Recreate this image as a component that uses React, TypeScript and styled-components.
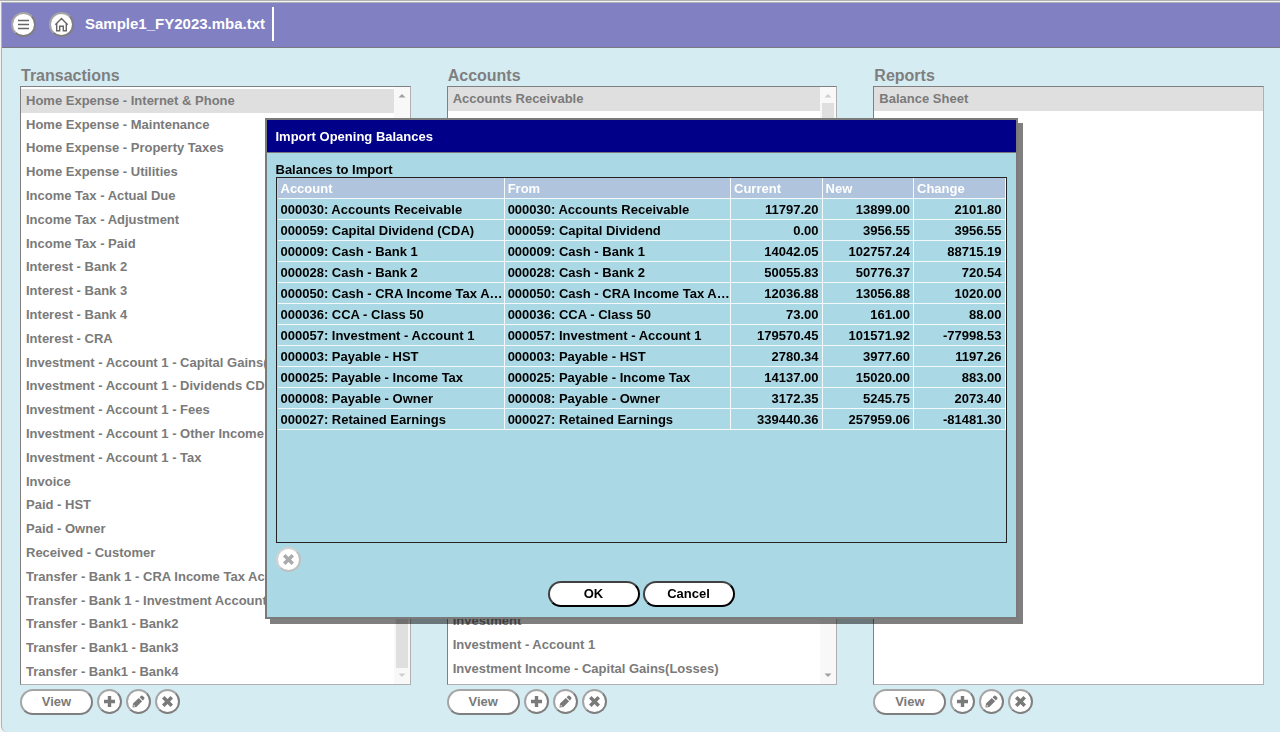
import React from "react";
import styled, { createGlobalStyle } from "styled-components";

const GlobalStyle = createGlobalStyle`
  * { box-sizing: border-box; }
  body {
    margin: 0;
    background: #f4f4f4;
    font-family: "Liberation Sans", Arial, sans-serif;
    font-size: 13px;
    font-weight: bold;
  }
  h1, h2, ul { margin: 0; padding: 0; }
  button { font: inherit; }
`;

const Page = styled.div`
  min-height: 100vh;
  display: flex;
  border-top: 1px solid #b0b0b0;
  padding: 1px 0 0 1px;
`;

const Workspace = styled.div`
  flex: 1;
  min-width: 0;
  display: flex;
  flex-direction: column;
  background: #d5ecf2;
  border: 1px solid #a9b3b8;
  border-right: 0;
  border-bottom: 0;
  border-bottom-left-radius: 6px;
`;

const TopBar = styled.header`
  display: flex;
  align-items: center;
  height: 45px;
  padding: 0 0 2px 9px;
  gap: 13px;
  background: #8080c2;
  border-bottom: 1px solid #7b7783;
`;

const FileName = styled.h1`
  font-size: 15px;
  line-height: 20px;
  color: #fff;
  margin-left: -2px;
`;

const Divider = styled.span`
  width: 2px;
  height: 34px;
  margin-left: -6px;
  background: #fff;
`;

const Columns = styled.main`
  flex: 1;
  display: flex;
  gap: 36px;
  padding: 18px 16px 17px 18px;
`;

const Column = styled.section`
  flex: 1;
  min-width: 0;
  display: flex;
  flex-direction: column;
`;

const Heading = styled.h2`
  font-size: 16px;
  line-height: 20px;
  color: #7f7f7f;
  padding-left: 1px;
`;

const ListBox = styled.div`
  flex: 1;
  display: flex;
  background: #fff;
  border: 1px solid #b0b0b0;
  border-top-color: #808080;
  border-left-color: #808080;
`;

const Items = styled.ul<{ $inset?: boolean }>`
  flex: 1;
  min-width: 0;
  display: flex;
  flex-direction: column;
  list-style: none;
  padding-top: ${(p) => (p.$inset ? 2 : 0)}px;
  padding-bottom: ${(p) => (p.$inset ? 0 : 3)}px;
`;

const Item = styled.li<{ $selected?: boolean; $fill?: boolean; $pushed?: boolean }>`
  flex: ${(p) => (p.$fill ? "1 1 0" : "0 0 24px")};
  display: flex;
  align-items: center;
  line-height: 14px;
  padding-left: 5px;
  margin-top: ${(p) => (p.$pushed ? "auto" : 0)};
  white-space: nowrap;
  overflow: hidden;
  color: #7a7a7a;
  background: ${(p) => (p.$selected ? "#dfdfdf" : "transparent")};
`;

const ScrollTrack = styled.div`
  width: 16px;
  display: flex;
  flex-direction: column;
  align-items: center;
  background: #f8f8f8;
`;

const ScrollThumb = styled.div<{ $end?: boolean }>`
  width: 12px;
  height: 85%;
  background: #dfdfdf;
  margin-top: ${(p) => (p.$end ? "auto" : 0)};
  margin-bottom: ${(p) => (p.$end ? 0 : "auto")};
`;

const Arrow = styled.svg`
  display: block;
  width: 16px;
  height: 16px;
`;

const Actions = styled.div`
  display: flex;
  gap: 4px;
  padding-top: 4px;
`;

const PillButton = styled.button<{ $strong?: boolean }>`
  width: ${(p) => (p.$strong ? 92 : 73)}px;
  height: 26px;
  padding: 0;
  border-radius: 13px;
  background: #fff;
  border: 2px solid;
  border-color: ${(p) => (p.$strong ? "#404040 #000 #000 #404040" : "#a5a5a5 #7f7f7f #7f7f7f #a5a5a5")};
  line-height: 20px;
  color: ${(p) => (p.$strong ? "#000" : "#7a7a7a")};
`;

const RoundButton = styled.button`
  width: 25px;
  height: 25px;
  padding: 0;
  display: flex;
  align-items: center;
  justify-content: center;
  border-radius: 50%;
  background: #fff;
  border: 2px solid;
  border-color: #a5a5a5 #7f7f7f #7f7f7f #a5a5a5;
  color: #7a7a7a;
  &:disabled {
    border-color: #d2d2d2 #bfbfbf #bfbfbf #d2d2d2;
    color: #aaa;
  }
  svg { display: block; flex: none; }
`;

const Overlay = styled.div`
  position: fixed;
  inset: 0;
  display: flex;
  align-items: center;
  justify-content: center;
  padding: 5px 0 0 2px;
`;

const Dialog = styled.div`
  width: 753px;
  max-width: 96vw;
  background: #aad8e4;
  border: 2px solid #7a7a7a;
  box-shadow: 5px 5px 0 rgba(0, 0, 0, 0.5);
`;

const DialogTitle = styled.h2`
  height: 33px;
  padding-left: 9px;
  font-size: 13px;
  line-height: 34px;
  color: #fff;
  background: #000089;
  border-bottom: 1px solid #777;
`;

const DialogBody = styled.div`
  padding: 10px 9px;
`;

const TableFrame = styled.div`
  min-height: 366px;
  border: 1px solid #222;
  padding-left: 1px;
`;

const Caption = styled.div`
  line-height: 14px;
  color: #000;
`;

const Table = styled.table`
  width: 100%;
  table-layout: fixed;
  border-collapse: separate;
  border-spacing: 0;
`;

const Cell = styled.td<{ $number?: boolean }>`
  height: 21px;
  padding: 1px ${(p) => (p.$number ? 3 : 0)}px 0 3px;
  line-height: 19px;
  text-align: ${(p) => (p.$number ? "right" : "left")};
  white-space: nowrap;
  overflow: hidden;
  text-overflow: ellipsis;
  border-right: 1px solid #f4fafc;
  border-bottom: 1px solid #f4fafc;
`;

const HeadCell = styled(Cell)`
  color: #fff;
  background: #b0c4de;
`;

const DialogTools = styled.div`
  padding-top: 4px;
`;

const DialogButtons = styled.div`
  display: flex;
  justify-content: center;
  gap: 3px;
  padding-top: 9px;
`;

const PlusIcon = () => (
  <svg width="13" height="13" viewBox="0 0 13 13" fill="currentColor" aria-hidden="true">
    <path d="M4.8 1h3.4v3.8H12v3.4H8.2V12H4.8V8.2H1V4.8h3.8z" />
  </svg>
);
const PencilIcon = () => (
  <svg width="13" height="13" viewBox="0 0 13 13" fill="currentColor" aria-hidden="true">
    <path fillRule="evenodd" d="M.5 12.5 1 8.6 6.8 3 10.1 6.3 4.4 12ZM7.6 2.3 9.2.8Q10 .3 10.8.9L12.2 2.3Q12.8 3.1 12.2 3.9L10.8 5.5ZM1.8 9.7 1.6 11.4 3.3 11.2Z" />
  </svg>
);
const CrossIcon = () => (
  <svg width="13" height="13" viewBox="0 0 13 13" fill="currentColor" aria-hidden="true">
    <path d="M3.5 1 6.5 4 9.5 1 12 3.5 9 6.5 12 9.5 9.5 12 6.5 9 3.5 12 1 9.5 4 6.5 1 3.5Z" />
  </svg>
);
const MenuIcon = () => (
  <svg width="13" height="13" viewBox="0 0 13 13" stroke="#666" strokeWidth="1.4" aria-hidden="true">
    <path d="M1 2.5h11M1 6.5h11M1 10.5h11" />
  </svg>
);
const HomeIcon = () => (
  <svg width="15" height="15" viewBox="0 0 15 15" fill="none" stroke="#666" strokeWidth="1.4" aria-hidden="true">
    <path d="M1.3 7.8 7.5 1.5 13.7 7.8M2.7 6.6v7.2h3V9.2h3.6v4.6h3V6.6" />
  </svg>
);

function Scrollbar({ atEnd }: { atEnd?: boolean }) {
  return (
    <ScrollTrack aria-hidden="true">
      <Arrow viewBox="0 0 16 16"><path d="M4.5 10.5 8 7l3.5 3.5z" fill={atEnd ? "#a0a0a0" : "#cfcfcf"} /></Arrow>
      <ScrollThumb $end={atEnd} />
      <Arrow viewBox="0 0 16 16"><path d="M4.5 5.5 8 9l3.5-3.5z" fill={atEnd ? "#cfcfcf" : "#a0a0a0"} /></Arrow>
    </ScrollTrack>
  );
}

function ListActions() {
  return (
    <Actions>
      <PillButton>View</PillButton>
      <RoundButton aria-label="Add"><PlusIcon /></RoundButton>
      <RoundButton aria-label="Edit"><PencilIcon /></RoundButton>
      <RoundButton aria-label="Delete"><CrossIcon /></RoundButton>
    </Actions>
  );
}

const transactions = [
  "Home Expense - Internet & Phone", "Home Expense - Maintenance", "Home Expense - Property Taxes",
  "Home Expense - Utilities", "Income Tax - Actual Due", "Income Tax - Adjustment", "Income Tax - Paid",
  "Interest - Bank 2", "Interest - Bank 3", "Interest - Bank 4", "Interest - CRA",
  "Investment - Account 1 - Capital Gains(Losses)", "Investment - Account 1 - Dividends CDN",
  "Investment - Account 1 - Fees", "Investment - Account 1 - Other Income", "Investment - Account 1 - Tax",
  "Invoice", "Paid - HST", "Paid - Owner", "Received - Customer",
  "Transfer - Bank 1 - CRA Income Tax Account", "Transfer - Bank 1 - Investment Account",
  "Transfer - Bank1 - Bank2", "Transfer - Bank1 - Bank3", "Transfer - Bank1 - Bank4",
];

const lastAccounts = ["Investment", "Investment - Account 1", "Investment Income - Capital Gains(Losses)"];

const balances = [
  ["000030: Accounts Receivable", "000030: Accounts Receivable", "11797.20", "13899.00", "2101.80"],
  ["000059: Capital Dividend (CDA)", "000059: Capital Dividend", "0.00", "3956.55", "3956.55"],
  ["000009: Cash - Bank 1", "000009: Cash - Bank 1", "14042.05", "102757.24", "88715.19"],
  ["000028: Cash - Bank 2", "000028: Cash - Bank 2", "50055.83", "50776.37", "720.54"],
  ["000050: Cash - CRA Income Tax Account", "000050: Cash - CRA Income Tax Account", "12036.88", "13056.88", "1020.00"],
  ["000036: CCA - Class 50", "000036: CCA - Class 50", "73.00", "161.00", "88.00"],
  ["000057: Investment - Account 1", "000057: Investment - Account 1", "179570.45", "101571.92", "-77998.53"],
  ["000003: Payable - HST", "000003: Payable - HST", "2780.34", "3977.60", "1197.26"],
  ["000025: Payable - Income Tax", "000025: Payable - Income Tax", "14137.00", "15020.00", "883.00"],
  ["000008: Payable - Owner", "000008: Payable - Owner", "3172.35", "5245.75", "2073.40"],
  ["000027: Retained Earnings", "000027: Retained Earnings", "339440.36", "257959.06", "-81481.30"],
];

function ImportDialog() {
  return (
    <Overlay>
      <Dialog role="dialog" aria-modal="true" aria-labelledby="import-title">
        <DialogTitle id="import-title">Import Opening Balances</DialogTitle>
        <DialogBody>
          <Caption id="import-caption">Balances to Import</Caption>
          <TableFrame>
            <Table aria-labelledby="import-caption">
              <colgroup>
                <col style={{ width: "31.2%" }} />
                <col style={{ width: "31.1%" }} />
                <col />
                <col />
                <col />
              </colgroup>
              <thead>
                <tr>
                  {["Account", "From", "Current", "New", "Change"].map((h) => (
                    <HeadCell as="th" scope="col" key={h}>{h}</HeadCell>
                  ))}
                </tr>
              </thead>
              <tbody>
                {balances.map((row) => (
                  <tr key={row[0]}>
                    {row.map((value, i) => (
                      <Cell key={i} $number={i > 1}>{value}</Cell>
                    ))}
                  </tr>
                ))}
              </tbody>
            </Table>
          </TableFrame>
          <DialogTools>
            <RoundButton disabled aria-label="Remove"><CrossIcon /></RoundButton>
          </DialogTools>
          <DialogButtons>
            <PillButton $strong>OK</PillButton>
            <PillButton $strong>Cancel</PillButton>
          </DialogButtons>
        </DialogBody>
      </Dialog>
    </Overlay>
  );
}

export default function App() {
  return (
    <>
      <GlobalStyle />
      <Page>
        <Workspace>
          <TopBar>
            <RoundButton aria-label="Menu"><MenuIcon /></RoundButton>
            <RoundButton aria-label="Home"><HomeIcon /></RoundButton>
            <FileName>Sample1_FY2023.mba.txt</FileName>
            <Divider />
          </TopBar>
          <Columns>
            <Column>
              <Heading>Transactions</Heading>
              <ListBox>
                <Items $inset role="listbox" aria-label="Transactions">
                  {transactions.map((t, i) => (
                    <Item key={t} role="option" aria-selected={i === 0} $fill $selected={i === 0}>{t}</Item>
                  ))}
                </Items>
                <Scrollbar atEnd />
              </ListBox>
              <ListActions />
            </Column>
            <Column>
              <Heading>Accounts</Heading>
              <ListBox>
                <Items role="listbox" aria-label="Accounts">
                  <Item role="option" aria-selected $selected>Accounts Receivable</Item>
                  {lastAccounts.map((a, i) => (
                    <Item key={a} role="option" aria-selected={false} $pushed={i === 0}>{a}</Item>
                  ))}
                </Items>
                <Scrollbar />
              </ListBox>
              <ListActions />
            </Column>
            <Column>
              <Heading>Reports</Heading>
              <ListBox>
                <Items role="listbox" aria-label="Reports">
                  <Item role="option" aria-selected $selected>Balance Sheet</Item>
                </Items>
              </ListBox>
              <ListActions />
            </Column>
          </Columns>
        </Workspace>
      </Page>
      <ImportDialog />
    </>
  );
}
